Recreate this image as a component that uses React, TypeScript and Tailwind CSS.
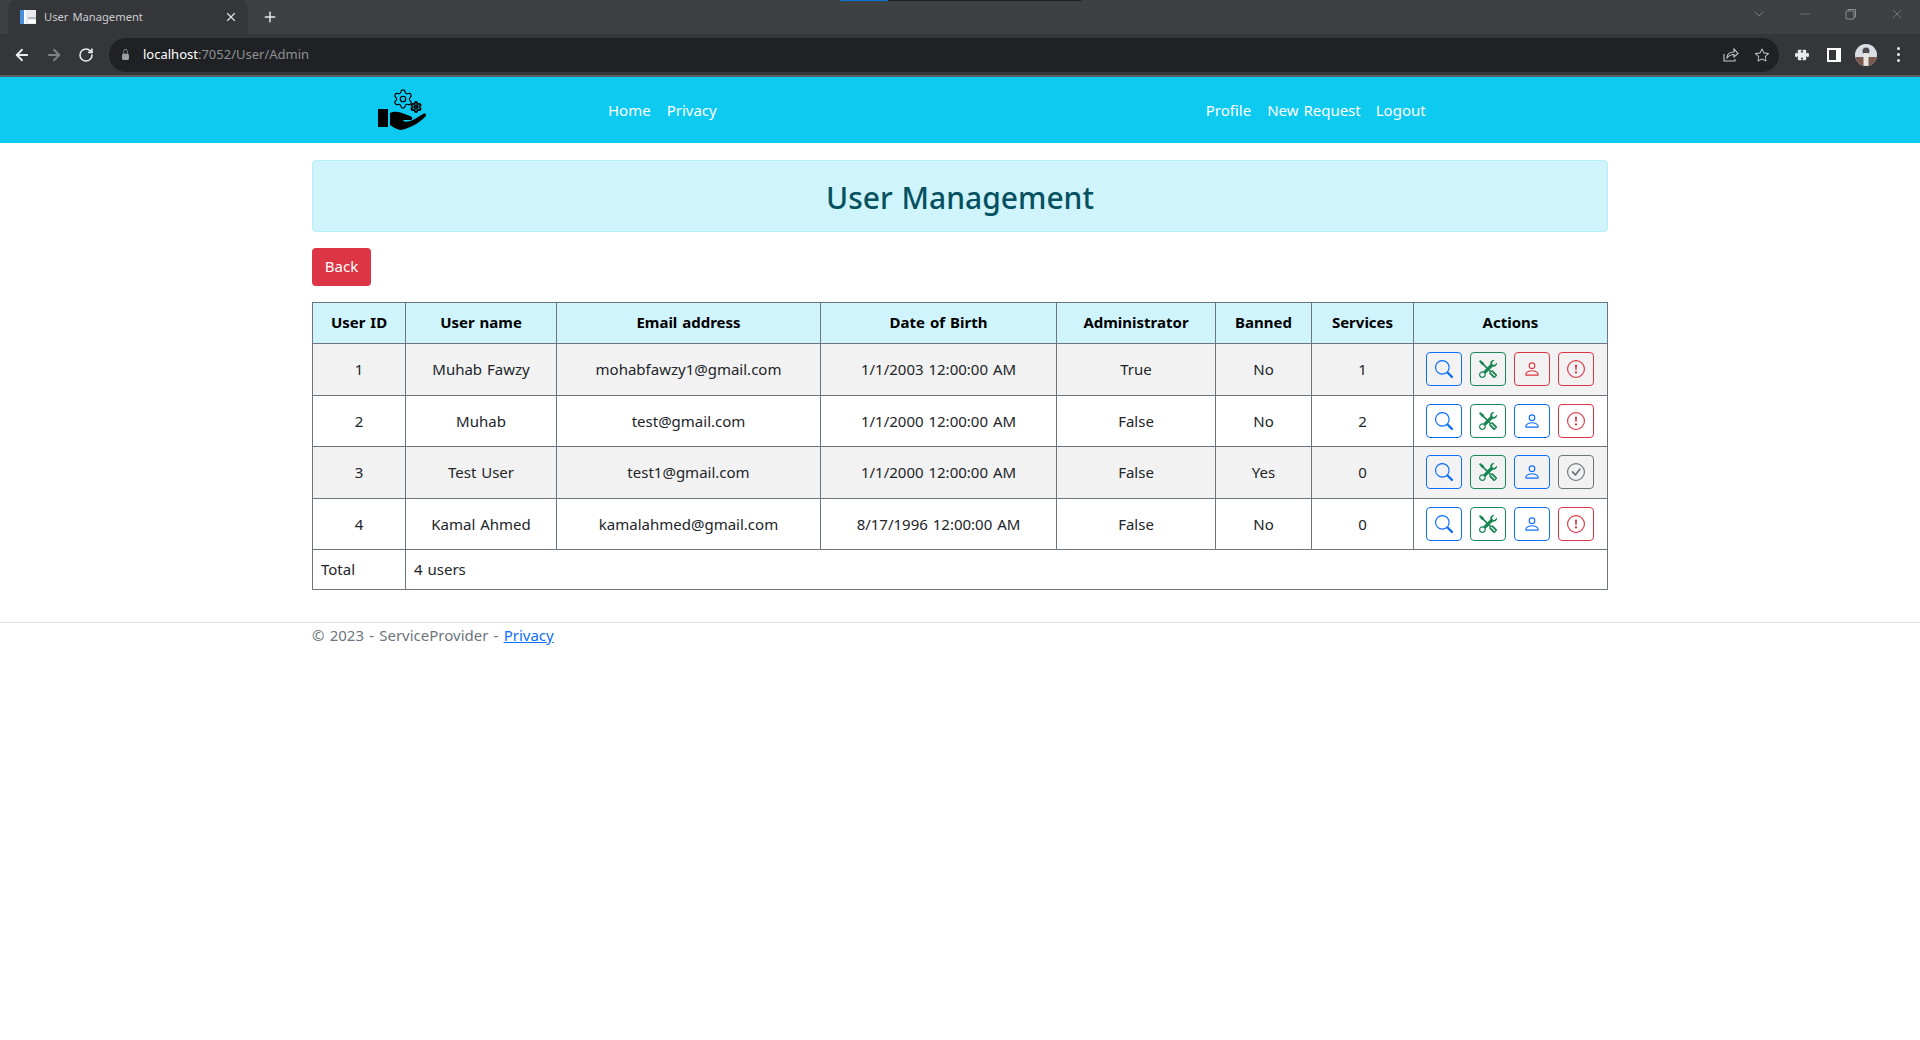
import React from "react";
import { BsSearch, BsTools, BsPerson, BsExclamationCircle, BsCheckCircle, BsLockFill, BsStar, BsPuzzleFill } from "react-icons/bs";
import { ArrowLeft, ArrowRight, RotateCw, X, Plus, ChevronDown, Minus, Settings } from "lucide-react";

const F = "font-['Noto_Sans','Open_Sans',sans-serif]";
const rows = [
  ["1", "Muhab Fawzy", "mohabfawzy1@gmail.com", "1/1/2003 12:00:00 AM", "True", "No", "1", "red", "ban"],
  ["2", "Muhab", "test@gmail.com", "1/1/2000 12:00:00 AM", "False", "No", "2", "blue", "ban"],
  ["3", "Test User", "test1@gmail.com", "1/1/2000 12:00:00 AM", "False", "Yes", "0", "blue", "ok"],
  ["4", "Kamal Ahmed", "kamalahmed@gmail.com", "8/17/1996 12:00:00 AM", "False", "No", "0", "blue", "ban"],
];

function Btn({ c, children }: { c: string; children: React.ReactNode }) {
  return <span className={`w-[36px] h-[34px] flex items-center justify-center rounded border ${c}`}>{children}</span>;
}

function Logo() {
  return (
    <span className="relative block w-[48px] h-[40px]">
      <Settings size={22} strokeWidth={1.3} className="absolute left-[14px] top-[-2px] text-black" />
      <Settings size={12} strokeWidth={3.6} className="absolute left-[32px] top-[11px] text-black" />
      <svg viewBox="0 0 48 40" className="absolute inset-0 w-[48px] h-[40px]">
        <rect x="0" y="19" width="10" height="18" fill="#000" />
        <path d="M12 23C16 21 20 22 24 23L32 26C35 27 35 30 32 30L25 30L26 31.500C30 32 33 31 36 29.500L45 24C47 23 49 24 48 26C44 30 38 35 32 37C28 39 24 40 22 40C18 39 15 37 12 35Z" fill="#000" />
      </svg>
    </span>
  );
}

export default function App() {
  return (
    <div className={`h-[1040px] overflow-hidden bg-white text-[#212529] text-[15px] [word-spacing:1px] ${F}`}>
      {/* tab strip */}
      <div className="h-[34px] bg-[#3e4144] flex items-start relative">
        <div className="absolute top-0 left-[840px] w-[48px] h-[1px] bg-[#0b70d5]" />
        <div className="absolute top-0 left-[888px] w-[193px] h-[1px] bg-[#202124]" />
        <div className="ml-[8px] w-[240px] h-[34px] bg-[#35363a] rounded-t-lg flex items-center pl-[12px] pr-[10px] text-[11.200px] text-[#c9ccd0]">
          <svg width="16" height="16" viewBox="0 0 16 16" className="mr-[8px] shrink-0">
            <rect x="0" y="1" width="16" height="14" fill="#e8eaed" />
            <rect x="0" y="1" width="4" height="14" fill="#4a90d9" />
            <rect x="4" y="1" width="2" height="14" fill="#ffffff" />
            <rect x="8" y="8" width="8" height="2" fill="#b9bcc2" />
            <rect x="8" y="11" width="8" height="3" fill="#ffffff" />
          </svg>
          <span className="flex-1">User Management</span>
          <X size={14} className="text-[#dee1e6]" />
        </div>
        <Plus size={16} strokeWidth={2.2} className="ml-[14px] mt-[9px] text-[#e8eaed]" />
        <div className="ml-auto flex items-center text-[#8b8e92] pr-[15px] pt-[6px]">
          <ChevronDown size={16} strokeWidth={1.2} />
          <Minus size={14} strokeWidth={1} className="ml-[31px]" />
          <svg width="12" height="12" viewBox="0 0 12 12" fill="none" stroke="currentColor" className="ml-[33px]"><rect x="1" y="3" width="8" height="8" rx="1" /><path d="M3 3V1.500h7.500V9H9" /></svg>
          <X size={16} strokeWidth={1} className="ml-[32px]" />
        </div>
      </div>
      {/* toolbar */}
      <div className="h-[43px] bg-[#35363a] border-b-[2px] border-[#5a5c60] flex items-center pl-[13px]">
        <ArrowLeft size={18} strokeWidth={2.4} className="text-[#e8eaed]" />
        <ArrowRight size={18} strokeWidth={2.4} className="ml-[14px] text-[#7f8285]" />
        <RotateCw size={16} strokeWidth={2.4} className="ml-[15px] text-[#e8eaed]" />
        <div className="ml-[15px] w-[1670px] h-[34px] bg-[#202124] rounded-full flex items-center pl-[11px] pr-[10px] text-[13px]">
          <BsLockFill size={11} className="text-[#9aa0a6] mr-[12px]" />
          <span className="text-white pt-[1px]">localhost</span>
          <span className="text-[#8e9195] pt-[1px]">:7052/User/Admin</span>
          <span className="ml-auto flex items-center gap-[16px] text-[#c4c7c5]">
            <svg width="16" height="15" viewBox="0 0 16 15" fill="none" stroke="currentColor" strokeWidth="1.100">
              <path d="M1 7v7h11v-2" />
              <path d="M4 11c0-4 3-6 7-6V2l4 4.500L11 10V7.500c-3 0-5 1-7 3.500z" />
            </svg>
            <BsStar size={14} />
          </span>
        </div>
        <BsPuzzleFill size={14} className="ml-[16px] text-[#e8eaed]" />
        <span className="ml-[18px] w-[14px] h-[14px] bg-white flex items-start"><span className="ml-[2px] mt-[2px] w-[7px] h-[10px] bg-[#35363a]" /></span>
        <svg width="22" height="22" viewBox="0 0 22 22" className="ml-[14px] rounded-full bg-[#d9dee4]">
          <circle cx="11" cy="7" r="3.500" fill="#4a4a50" />
          <rect x="0" y="13" width="22" height="9" fill="#7a5a50" />
          <rect x="8.500" y="9" width="5" height="13" fill="#e9e4df" />
        </svg>
        <span className="ml-[20px] flex flex-col gap-[3px]">
          <span className="w-[3px] h-[3px] rounded-full bg-[#e8eaed]" />
          <span className="w-[3px] h-[3px] rounded-full bg-[#e8eaed]" />
          <span className="w-[3px] h-[3px] rounded-full bg-[#e8eaed]" />
        </span>
      </div>
      {/* navbar */}
      <nav className="h-[66px] bg-[#0dcaf0] flex items-center text-white pt-[1px]">
        <div className="ml-[378px] w-[230px] mt-[-1px]"><Logo /></div>
        <span>Home</span>
        <span className="ml-[16px]">Privacy</span>
        <span className="ml-[489px]">Profile</span>
        <span className="ml-[16px]">New Request</span>
        <span className="ml-[15px]">Logout</span>
      </nav>
      {/* main */}
      <main className="w-[1296px] mx-auto pt-[17px]">
        <div className="h-[72px] bg-[#cff4fc] border border-[#b6effb] rounded flex items-center justify-center text-[#055160] text-[30px] font-medium pt-[2px]">
          User Management
        </div>
        <button className="mt-[16px] block h-[38px] w-[59px] bg-[#dc3545] text-white rounded pb-[1px]">Back</button>
        <table className="mt-[16px] w-[1295px] table-fixed border-collapse text-center">
          <colgroup>
            <col className="w-[93px]" /><col className="w-[151px]" /><col className="w-[264px]" /><col className="w-[236px]" /><col className="w-[159px]" /><col className="w-[96px]" /><col className="w-[102px]" /><col className="w-[194px]" />
          </colgroup>
          <thead>
            <tr className="h-[41px] bg-[#cff4fc] text-black">
              {["User ID", "User name", "Email address", "Date of Birth", "Administrator", "Banned", "Services", "Actions"].map((h) => (
                <th key={h} className="border border-[#6c757d] font-bold p-0 pb-[1px]">{h}</th>
              ))}
            </tr>
          </thead>
          <tbody>
            {rows.map((r, i) => (
              <tr key={r[0]} className={`h-[51.500px] ${i % 2 === 0 ? "bg-[#f2f2f2]" : "bg-white"}`}>
                {r.slice(0, 7).map((v, j) => (
                  <td key={j} className="border border-[#6c757d] p-0">{v}</td>
                ))}
                <td className="border border-[#6c757d] p-0">
                  <div className="flex justify-center gap-[8px] pr-[2px]">
                    <Btn c="border-[#0d6efd] text-[#0d6efd]"><BsSearch size={18} /></Btn>
                    <Btn c="border-[#198754] text-[#198754]"><BsTools size={18} /></Btn>
                    {r[7] === "red"
                      ? <Btn c="border-[#dc3545] text-[#dc3545]"><BsPerson size={18} /></Btn>
                      : <Btn c="border-[#0d6efd] text-[#0d6efd]"><BsPerson size={18} /></Btn>}
                    {r[8] === "ban"
                      ? <Btn c="border-[#dc3545] text-[#dc3545]"><BsExclamationCircle size={18} /></Btn>
                      : <Btn c="border-[#6c757d] text-[#6c757d]"><BsCheckCircle size={18} /></Btn>}
                  </div>
                </td>
              </tr>
            ))}
            <tr className="h-[40px] text-left">
              <td className="border border-[#6c757d] px-[8px] py-0">Total</td>
              <td colSpan={7} className="border border-[#6c757d] px-[8px] py-0">4 users</td>
            </tr>
          </tbody>
        </table>
      </main>
      <footer className="mt-[32px] border-t border-[#dee2e6] text-[#6c757d]">
        <div className="w-[1296px] mx-auto leading-[24px]">
          <span className="[word-spacing:1.300px]">© 2023 - ServiceProvider - </span><a className="text-[#0d6efd] underline">Privacy</a>
        </div>
      </footer>
    </div>
  );
}
